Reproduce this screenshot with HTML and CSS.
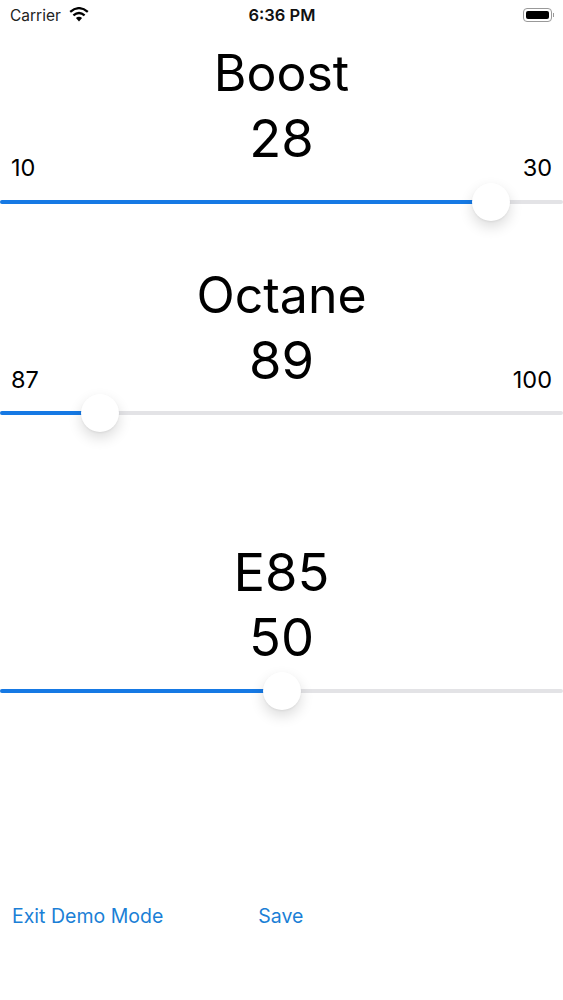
FILE: index.html
```html
<!DOCTYPE html>
<html lang="en">
<head>
    <meta charset="UTF-8">
    <meta name="viewport" content="width=device-width, initial-scale=1.0">
    <title>Tune Settings</title>
    <link rel="stylesheet" href="styles.css">
</head>
<body>
    <div class="status-bar">
        <div class="status-left">
            <span>Carrier</span>
            <svg class="wifi" width="20" height="15" viewBox="0 0 20 15">
                <path d="M10 14.6 L6.9 11.1 Q10 8.5 13.1 11.1 Z" fill="#000"/>
                <path d="M4.4 8.4 Q10 3.6 15.6 8.4" fill="none" stroke="#000" stroke-width="2.3"/>
                <path d="M1.2 4.9 Q10 -2.6 18.8 4.9" fill="none" stroke="#000" stroke-width="2.3"/>
            </svg>
        </div>
        <div class="status-time">6:36 PM</div>
        <div class="status-right">
            <div class="battery"><div class="battery-level"></div></div>
            <div class="battery-cap"></div>
        </div>
    </div>

    <div class="control control-boost">
        <div class="name">Boost</div>
        <div class="value">28</div>
        <div class="limits"><span>10</span><span>30</span></div>
        <div class="slider">
            <div class="slider-fill" style="width: 491px"></div>
            <div class="slider-thumb" style="left: 472px"></div>
        </div>
    </div>

    <div class="control control-octane">
        <div class="name">Octane</div>
        <div class="value">89</div>
        <div class="limits"><span>87</span><span>100</span></div>
        <div class="slider">
            <div class="slider-fill" style="width: 100px"></div>
            <div class="slider-thumb" style="left: 81px"></div>
        </div>
    </div>

    <div class="control control-e85">
        <div class="name">E85</div>
        <div class="value">50</div>
        <div class="slider">
            <div class="slider-fill" style="width: 282px"></div>
            <div class="slider-thumb" style="left: 263px"></div>
        </div>
    </div>

    <div class="actions">
        <a class="action">Exit Demo Mode</a>
        <a class="action action-save">Save</a>
    </div>
</body>
</html>
```

FILE: styles.css
```css
html, body {
    margin: 0;
    height: 100%;
    background-color: #fff;
    font-family: Inter, "Liberation Sans", sans-serif;
    color: #000;
    overflow: hidden;
}
.status-bar {
    height: 30px;
    padding: 0 9px 0 10px;
    display: grid;
    grid-template-columns: 1fr auto 1fr;
    align-items: center;
    font-size: 15.5px;
}
.status-left {
    display: flex;
    align-items: center;
    gap: 8px;
    color: #222;
}
.wifi {
    margin-top: -2px;
}
.status-time {
    font-size: 16.5px;
    font-weight: 600;
    color: #111;
}
.status-right {
    display: flex;
    justify-content: flex-end;
    align-items: center;
}
.battery {
    width: 29px;
    height: 14px;
    box-sizing: border-box;
    border: 1px solid #999;
    border-radius: 4px;
    padding: 2px;
}
.battery-level {
    height: 100%;
    background: #000;
    border-radius: 2px;
}
.battery-cap {
    width: 1px;
    height: 4px;
    margin-left: 1px;
    background: #999;
}
.control {
    display: flex;
    flex-direction: column;
    align-items: center;
}
.name, .value {
    font-size: 50px;
    line-height: 65px;
}
.value, .control-e85 .name {
    font-size: 52.5px;
}
.control-boost {
    margin-top: 11px;
}
.control-octane {
    margin-top: 59px;
}
.control-e85 {
    margin-top: 125px;
}
.limits {
    align-self: stretch;
    display: flex;
    justify-content: space-between;
    padding: 0 11px 0 11px;
    font-size: 23.5px;
    line-height: 30px;
}
.control-boost .limits {
    margin-top: -18px;
}
.control-octane .limits {
    margin-top: -28px;
}
.slider {
    align-self: stretch;
    position: relative;
    height: 4px;
    background: #e3e3e6;
    border-radius: 2px;
}
.control-boost .slider {
    margin-top: 17px;
}
.control-octane .slider {
    margin-top: 16px;
}
.control-e85 .slider {
    margin-top: 19px;
}
.slider-fill {
    height: 100%;
    background: #1679e4;
    border-radius: 2px;
}
.slider-thumb {
    position: absolute;
    top: -17px;
    width: 38px;
    height: 38px;
    border-radius: 50%;
    background: #fff;
    box-shadow: 0 6px 14px rgba(0, 0, 0, 0.14), 0 1px 2px rgba(0, 0, 0, 0.06);
}
.actions {
    margin-top: 210px;
    padding: 0 12px;
    display: flex;
    font-size: 19.5px;
    line-height: 26px;
    color: #1b7fd6;
}
.action-save {
    margin-left: 95px;
}
```
